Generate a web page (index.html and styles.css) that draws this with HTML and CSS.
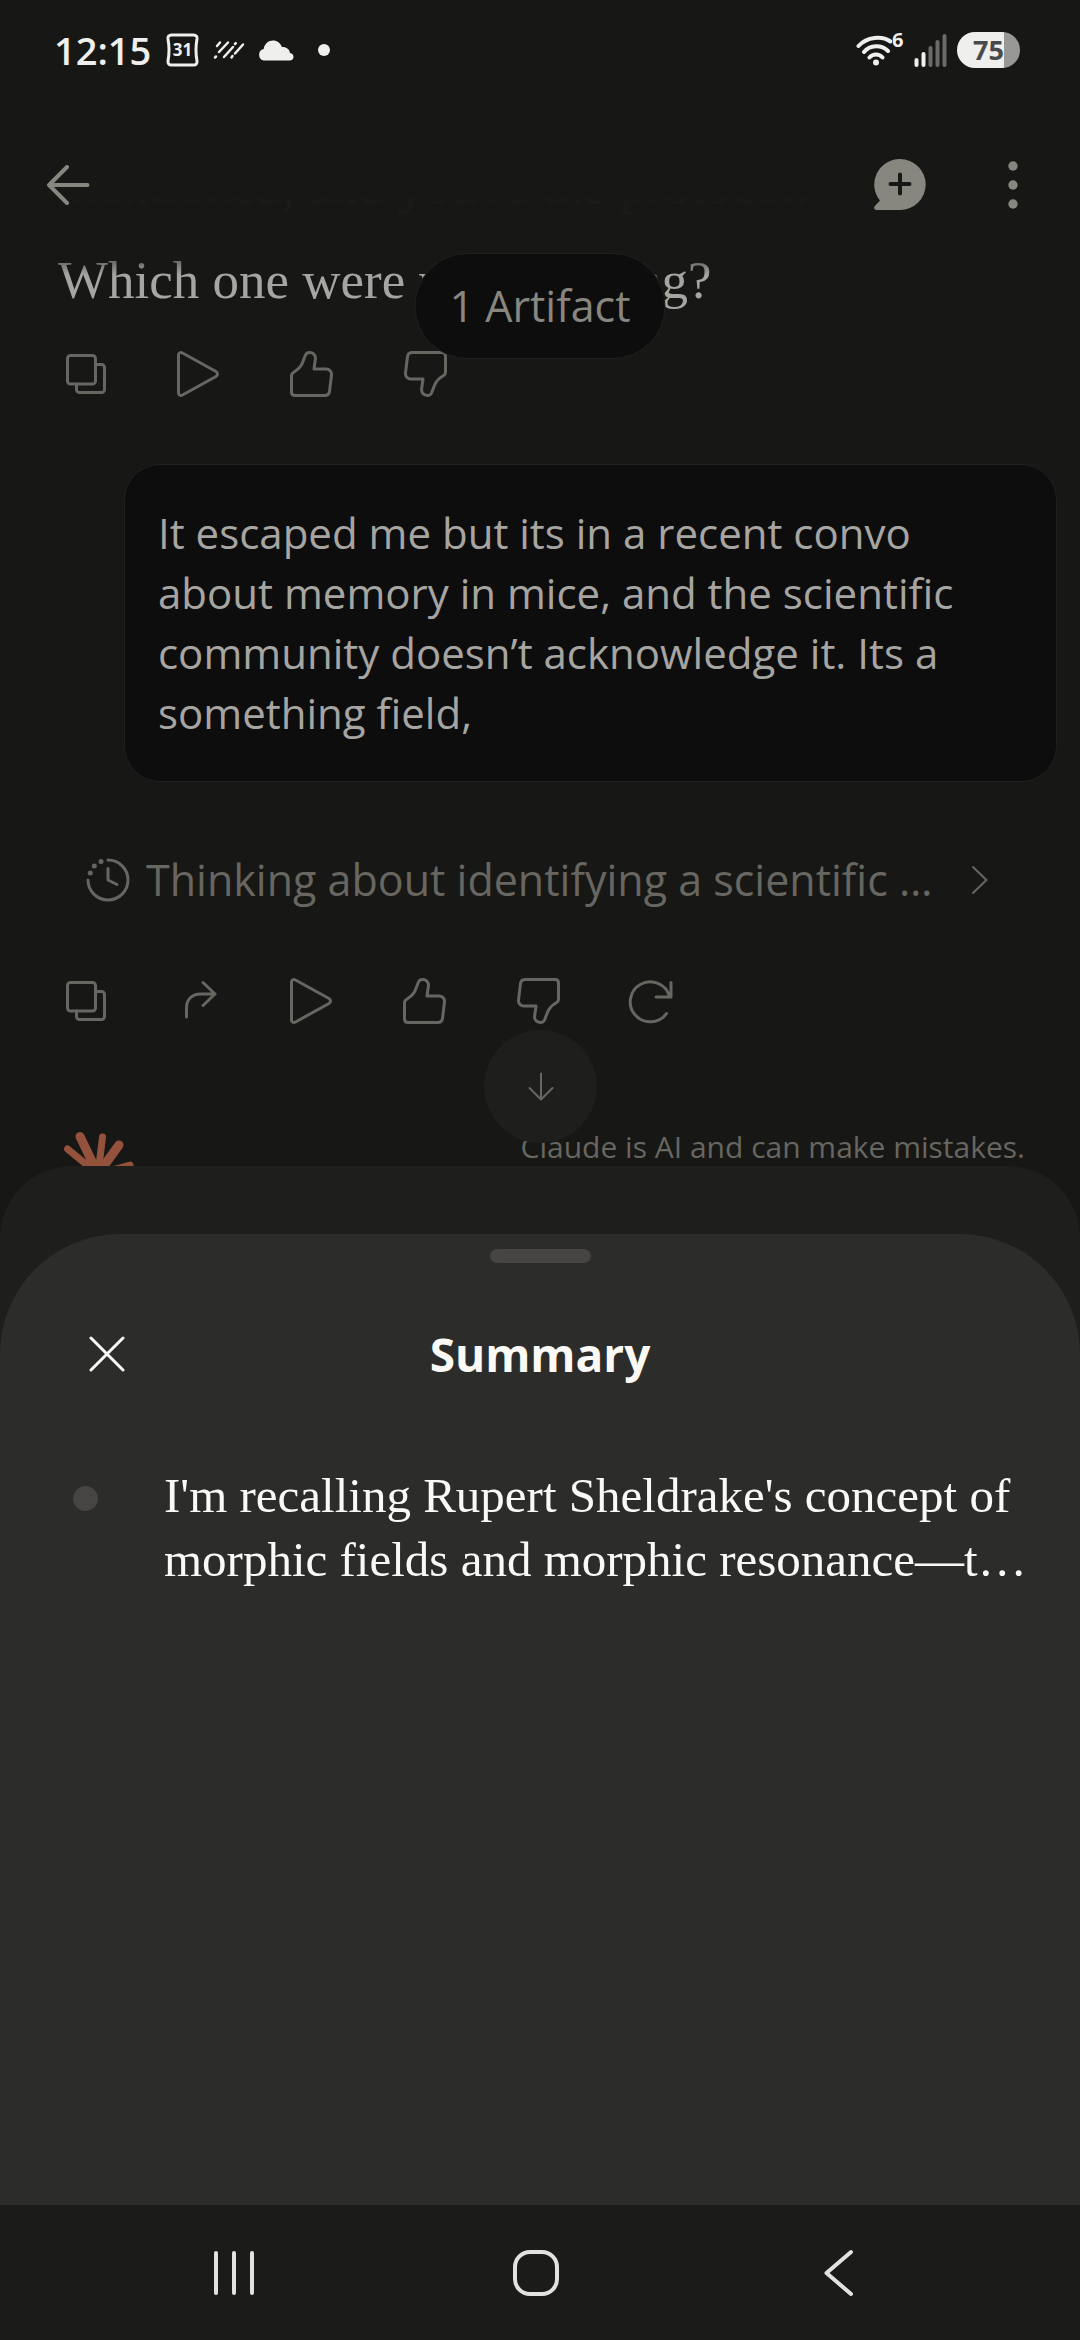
FILE: index.html
```html
<!DOCTYPE html>
<html lang="en">
<head>
    <meta charset="UTF-8">
    <meta name="viewport" content="width=device-width, initial-scale=1">
    <title>Summary</title>
    <link rel="stylesheet" href="styles.css">
</head>
<body>
<svg class="defs" aria-hidden="true">
    <symbol id="copy" viewBox="0 0 48 48">
        <rect x="5.5" y="5.5" width="28" height="28.5" rx="3"/>
        <path d="M34 14.500h5.500a3 3 0 0 1 3 3v22a3 3 0 0 1-3 3h-22a3 3 0 0 1-3-3V34"/>
    </symbol>
    <symbol id="play" viewBox="0 0 48 48">
        <path d="M3.500 5v38c0 2 2 3.200 4 2L41 26.500c2-1.300 2-3.700 0-5L7.500 3c-2-1.200-4 0-4 2z"/>
    </symbol>
    <symbol id="thumb" viewBox="0 0 48 48">
        <path d="M3.500 26c0-1.700.8-3 2.300-3.800C13 18 14 14 15.500 10l2-5C18.300 3.200 19.500 2.500 21.500 2.500c4 0 6.400 3 5.900 6.500L26 19h12c3.500 0 5.900 2.800 5.500 6l-2 16.500c-.4 2.800-2.200 4-4.800 4H7c-2.300 0-3.500-1.200-3.500-3.500z"/>
    </symbol>
    <symbol id="share" viewBox="0 0 48 48">
        <path d="M11.500 40V31c0-8.500 5.500-14 14-14H40M28 5.500L40 17 28 28.500"/>
    </symbol>
    <symbol id="retry" viewBox="0 0 48 48">
        <path d="M39.500 36.500A20 20 0 1 1 42.500 19.500M44 5.500V20H29"/>
    </symbol>
    <symbol id="clock" viewBox="0 0 48 48">
        <path d="M24 4a20 20 0 1 1-20 20M24 12.500V24l9 4.500"/>
        <path class="dots" d="M6.300 17h.01M10.300 10h.01M17 5.500h.01"/>
    </symbol>
</svg>

<div class="phone">
    <header class="top">
        <div class="status">
            <span class="time">12:15</span>
            <svg class="st-cal" width="33" height="34" viewBox="0 0 33 34">
                <path d="M5.500 2h22c2.500 0 3.800 1.500 3.500 4-1.300 7-1.300 15 0 22 .3 2.500-1 4-3.500 4h-22C3 32 1.700 30.500 2 28c1.300-7 1.300-15 0-22-.3-2.500 1-4 3.500-4z"/>
                <text x="16.500" y="23" text-anchor="middle">31</text>
            </svg>
            <svg class="st-rain" width="32" height="20" viewBox="0 0 32 20">
                <path d="M4 6l3-3.500M6 12l9-9.500M2 17.500l1-1M11 17l9-10M22 4l.8-.8M18.500 17.500l1-1.500M22 13.500l8-9"/>
            </svg>
            <svg class="st-cloud" width="36" height="21" viewBox="0 0 36 21">
                <path d="M6 20.500a5.800 5.800 0 0 1-.3-11.400C6.500 3.500 10.500.5 15 .5c4.200 0 7.500 2.500 8.800 6.500 4.500-.3 7.700 2.300 8.200 6 2.200.5 3.500 1.800 3.500 3.800 0 2.200-1.500 3.700-3.800 3.700z"/>
            </svg>
            <span class="st-dot"></span>
            <span class="st-right">
                <svg class="st-wifi" width="36" height="32" viewBox="0 0 36 32">
                    <path d="M2.500 12C11 2.500 26 1.500 34.500 7.500M8 18c6-7.500 17.500-7.500 24-1M13.500 23.500c3.500-4 9.500-4 13 0"/>
                    <circle cx="20" cy="28.500" r="3"/>
                </svg>
                <sup>6</sup>
                <svg class="st-signal" width="34" height="34" viewBox="0 0 34 34">
                    <path d="M2.500 27v5M9.500 21v11"/>
                    <path class="off" d="M16.500 15v17M23.500 9v23M30.500 3v29"/>
                </svg>
                <span class="battery">75</span>
            </span>
        </div>
        <div class="appbar">
            <button class="icon-btn" aria-label="Back">
                <svg width="44" height="40" viewBox="0 0 44 40"><path d="M41.500 20H3M21 2L3 20l18 18"/></svg>
            </button>
            <button class="icon-btn new-chat" aria-label="New chat">
                <svg width="52" height="52" viewBox="0 0 52 52">
                    <path class="bubble-shape" d="M26 0a25.700 25.500 0 0 1 0 51H2.500C0 51-.6 48.500.9 46.900L6 41.600A25.700 25.500 0 0 1 26 0z"/>
                    <path class="plus" d="M16.500 25h19M26 15.500v19"/>
                </svg>
            </button>
            <button class="icon-btn more" aria-label="More options">
                <svg width="10" height="48" viewBox="0 0 10 48">
                    <circle cx="5" cy="5" r="4.700"/><circle cx="5" cy="24" r="4.700"/><circle cx="5" cy="43" r="4.700"/>
                </svg>
            </button>
        </div>
    </header>

    <button class="artifact-pill">1 Artifact</button>

    <main class="chat">
        <div class="reply">
            <p>mentioned, and you're the protocol.</p>
            <p>Which one were you thinking?</p>
        </div>
        <div class="actions">
            <button aria-label="Copy"><svg><use href="#copy"/></svg></button>
            <button aria-label="Play"><svg><use href="#play"/></svg></button>
            <button aria-label="Good response"><svg><use href="#thumb"/></svg></button>
            <button aria-label="Bad response"><svg class="flip"><use href="#thumb"/></svg></button>
        </div>

        <p class="user-msg">It escaped me but its in a recent convo about memory in mice, and the scientific community doesn’t acknowledge it. Its a something field,</p>

        <button class="thinking">
            <svg class="clock"><use href="#clock"/></svg>
            <span>Thinking about identifying a scientific …</span>
            <svg class="chev" width="18" height="30" viewBox="0 0 18 30"><path d="M2 2l13.500 13L2 28"/></svg>
        </button>

        <div class="actions second">
            <button aria-label="Copy"><svg><use href="#copy"/></svg></button>
            <button aria-label="Share"><svg><use href="#share"/></svg></button>
            <button aria-label="Play"><svg><use href="#play"/></svg></button>
            <button aria-label="Good response"><svg><use href="#thumb"/></svg></button>
            <button aria-label="Bad response"><svg class="flip"><use href="#thumb"/></svg></button>
            <button aria-label="Retry"><svg><use href="#retry"/></svg></button>
        </div>

        <div class="chat-foot">
            <svg class="spark" width="84" height="84" viewBox="0 0 84 84">
                <path d="M40 48L22 10.500M40 48L61 19"/>
                <path class="thin" d="M40 48L44.500 11M40 48L72 39M40 48L9.500 23M40 48L5 45M40 48L70 62M40 48L48 80M40 48L18 74"/>
            </svg>
            <span>Claude is AI and can make mistakes.</span>
        </div>
    </main>

    <button class="to-bottom" aria-label="Scroll to bottom">
        <svg width="28" height="30" viewBox="0 0 28 30"><path d="M14 1.500v26M2.500 16L14 27.500 25.500 16"/></svg>
    </button>

    <div class="sheet-back">
        <section class="sheet">
            <div class="handle"></div>
            <div class="sheet-head">
                <button aria-label="Close">
                    <svg width="36" height="36" viewBox="0 0 36 36"><path d="M2 2l32 32M34 2L2 34"/></svg>
                </button>
                <h1>Summary</h1>
            </div>
            <ul class="summary">
                <li>I'm recalling Rupert Sheldrake's concept of morphic fields and morphic resonance—t…</li>
            </ul>
        </section>
        <nav class="sysnav">
            <button aria-label="Recents">
                <svg width="48" height="48" viewBox="0 0 48 48"><path d="M6 4v40M24 4v40M42 4v40"/></svg>
            </button>
            <button aria-label="Home">
                <svg width="48" height="48" viewBox="0 0 48 48"><rect x="3" y="3" width="42" height="42" rx="15"/></svg>
            </button>
            <button aria-label="Back">
                <svg width="48" height="48" viewBox="0 0 48 48"><path d="M37 3L12.500 24 37 45"/></svg>
            </button>
        </nav>
    </div>
</div>
</body>
</html>
```

FILE: styles.css
```css
*{
    box-sizing:border-box;
}
body{
    margin:0;
    background:#171715;
    font-family:"Open Sans", "Noto Sans", sans-serif;
}
p, h1, ul{
    margin:0;
    padding:0;
    font-weight:400;
}
button{
    margin:0;
    padding:0;
    border:0;
    background:none;
    font:inherit;
    color:inherit;
    line-height:0;
}
svg{
    display:block;
    flex:none;
    fill:none;
    stroke:currentColor;
    stroke-linecap:round;
    stroke-linejoin:round;
}
.defs{
    position:absolute;
    width:0;
    height:0;
}
.phone{
    position:relative;
    height:100vh;
    overflow:hidden;
}

/* top bars, the chat fades out under them */
.top{
    position:absolute;
    z-index:2;
    top:0;
    left:0;
    right:0;
    height:275px;
    background:linear-gradient(#171715 196px, #171715fa 200px, #171715f7 218px, #17171566 262px, #17171500);
}
.status{
    display:flex;
    align-items:center;
    height:100px;
    padding:0 60px 0 54px;
    color:#efefed;
}
.time{
    font-size:38px;
    font-weight:600;
    line-height:40px;
    width:112px;
    white-space:nowrap;
}
.st-cal{
    stroke-width:3;
}
.st-cal text{
    font-size:17px;
    font-weight:700;
    fill:currentColor;
    stroke:none;
}
.st-rain{
    margin-left:14px;
    stroke-width:2.5;
}
.st-cloud{
    margin-left:13px;
    fill:currentColor;
    stroke:none;
}
.st-dot{
    width:12px;
    height:12px;
    margin-left:24px;
    border-radius:50%;
    background:#efefed;
}
.st-right{
    display:flex;
    align-items:center;
    margin-left:auto;
}
.st-wifi{
    stroke-width:4;
}
.st-wifi circle{
    fill:currentColor;
    stroke:none;
}
sup{
    align-self:flex-start;
    font-size:20px;
    font-weight:700;
    line-height:16px;
    width:22px;
}
.st-signal{
    stroke-width:4;
}
.off{
    stroke:#6b6b69;
}
.battery{
    width:63px;
    height:36px;
    margin-left:9px;
    border-radius:18px;
    background:linear-gradient(90deg, #efefed 75%, #989896 75%);
    color:#4a4a4c;
    font-size:27px;
    font-weight:700;
    line-height:36px;
    text-align:center;
}
.appbar{
    display:flex;
    align-items:center;
    height:170px;
    padding:0 62px 0 46px;
    color:#87867f;
}
.icon-btn svg{
    stroke-width:4;
}
.new-chat{
    margin-left:auto;
}
.bubble-shape, .more svg{
    fill:currentColor;
    stroke:none;
}
.plus{
    stroke:#171715;
}
.more{
    margin-left:82px;
}
.artifact-pill{
    position:absolute;
    z-index:3;
    top:253px;
    left:50%;
    transform:translateX(-50%);
    padding:0 34px;
    border:1px solid #1f1f1e;
    border-radius:53px;
    background:#0d0d0d;
    color:#87867f;
    font-size:43px;
    line-height:104px;
    white-space:nowrap;
}

/* conversation */
.chat{
    display:flex;
    flex-direction:column;
    padding-top:153px;
    color:#676660;
}
.reply{
    display:grid;
    gap:31px;
    padding:0 58px;
    color:#a6a5a2;
    font-family:"Liberation Serif", serif;
    font-size:53px;
    line-height:64px;
}
.actions{
    display:flex;
    margin-top:38px;
    padding-left:29px;
}
.actions button{
    display:flex;
    justify-content:center;
    width:113px;
}
.actions svg, .clock{
    width:48px;
    height:48px;
    stroke-width:3;
}
.flip{
    transform:rotate(180deg);
}
.user-msg{
    margin:66px 23px 0 124px;
    padding:38px 33px;
    border:1px solid #1f1f1e;
    border-radius:36px;
    background:#0d0d0d;
    color:#a6a5a2;
    font-size:42px;
    line-height:60px;
}
.thinking{
    display:flex;
    align-items:center;
    margin:68px 91px 0 84px;
    font-size:43px;
    line-height:60px;
    text-align:left;
}
.thinking span{
    margin-left:14px;
    white-space:nowrap;
}
.dots{
    stroke-width:5;
}
.chev{
    margin-left:auto;
    stroke-width:2;
}
.second{
    margin-top:67px;
}
.chat-foot{
    display:flex;
    justify-content:space-between;
    margin-top:101px;
    padding:0 55px 0 58px;
    font-size:30px;
    line-height:42px;
}
.spark{
    color:#94523d;
    stroke-width:9;
}
.thin{
    stroke-width:7;
}
.to-bottom{
    position:absolute;
    top:1030px;
    left:50%;
    display:flex;
    align-items:center;
    justify-content:center;
    width:113px;
    height:113px;
    margin-left:-56px;
    border-radius:50%;
    background:#1e1e1d;
    color:#676660;
}
.to-bottom svg{
    stroke-width:2;
}

/* bottom sheet */
.sheet-back{
    position:absolute;
    left:0;
    right:0;
    bottom:0;
    display:flex;
    flex-direction:column;
    height:calc(50vh + 4px);
    padding-top:68px;
    border-radius:72px 72px 0 0;
    background:#1e1e1c;
}
.sheet{
    flex:1;
    padding-top:15px;
    border-radius:120px 120px 0 0;
    background:#2c2c2a;
    color:#faf9f5;
}
.handle{
    width:101px;
    height:14px;
    margin:0 auto;
    border-radius:7px;
    background:#464543;
}
.sheet-head{
    display:grid;
    grid-template-columns:1fr auto 1fr;
    align-items:center;
    height:64px;
    margin-top:59px;
    padding:0 89px;
}
.sheet-head svg{
    stroke-width:3;
}
.sheet-head button{
    justify-self:start;
}
h1{
    font-size:46px;
    font-weight:700;
    line-height:64px;
}
.summary{
    margin-top:78px;
    padding:0 52px 0 73px;
    list-style:none;
}
.summary li{
    display:flex;
    gap:66px;
    font-family:"Liberation Serif", serif;
    font-size:49px;
    line-height:64px;
}
.summary li::before{
    content:"";
    flex:none;
    width:25px;
    height:25px;
    margin-top:22px;
    border-radius:50%;
    background:#464543;
}
.sysnav{
    display:flex;
    justify-content:center;
    align-items:center;
    gap:254px;
    height:135px;
    padding-right:8px;
    background:#1b1b19;
    color:#e2e2e0;
}
.sysnav svg{
    stroke-width:4;
}
```
